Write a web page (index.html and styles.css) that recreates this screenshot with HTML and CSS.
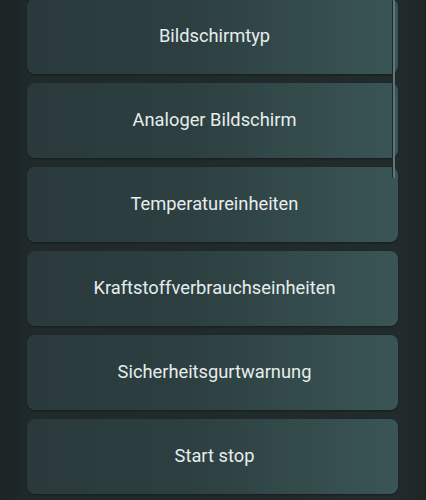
FILE: index.html
```html
<!DOCTYPE html>
<html lang="de">
<head>
<meta charset="utf-8">
<link rel="stylesheet" href="styles.css">
</head>
<body>
<div class="screen">
  <div class="list">
    <div class="item">Bildschirmtyp</div>
    <div class="item">Analoger Bildschirm</div>
    <div class="item">Temperatureinheiten</div>
    <div class="item">Kraftstoffverbrauchseinheiten</div>
    <div class="item">Sicherheitsgurtwarnung</div>
    <div class="item">Start stop</div>
  </div>
  <div class="scrollbar"></div>
</div>
</body>
</html>
```
FILE: styles.css
```css
html, body {
  margin: 0;
  padding: 0;
  background: #1f2828;
}
.screen {
  position: relative;
  width: 426px;
  height: 500px;
  overflow: hidden;
  background: linear-gradient(90deg, #1c2424 0px, #202a2a 30px, #212b2b 400px, #1d2525 426px);
}
.list {
  display: flex;
  flex-direction: column;
  gap: 9px;
  margin-top: -1px;
  padding-left: 27px;
  width: 371px;
}
.item {
  height: 75px;
  padding-bottom: 2px;
  padding-left: 4px;
  box-sizing: border-box;
  border-radius: 8px;
  background: linear-gradient(90deg, #2a3a3c 0%, #2d3f41 45%, #3a5555 100%);
  box-shadow: 0 1px 2px rgba(0, 0, 0, 0.35);
  display: flex;
  align-items: center;
  justify-content: center;
  color: #e6eded;
  font-family: Roboto, "Noto Sans", sans-serif;
  font-size: 18.3px;
}
.scrollbar {
  position: absolute;
  left: 393px;
  top: 0;
  width: 2px;
  height: 178px;
  border-radius: 1px;
  background: #5f7676;
  box-shadow: -1px 0 0 #1e2828;
}
```
